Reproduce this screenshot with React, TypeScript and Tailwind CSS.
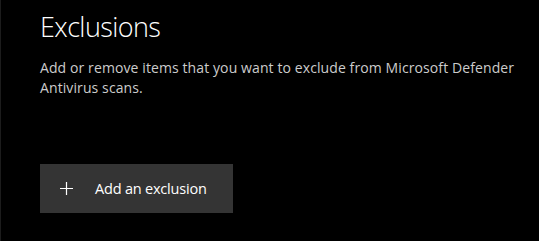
export default function App() {
  return (
    <div
      className="w-[539px] h-[241px] bg-black border-l border-[#1c1c1c] overflow-hidden"
      style={{ fontFamily: '"Open Sans", "Noto Sans", sans-serif' }}
    >
      <div className="pl-[39px] pt-[9px]">
        <h1 className="text-[27px] leading-[36px] font-light text-white tracking-[-0.6px]">Exclusions</h1>
        <p className="mt-[13px] text-[14px] leading-[20px] text-[#cccccc] w-[490px] tracking-[0.1px]">
          Add or remove items that you want to exclude from Microsoft Defender Antivirus scans.
        </p>
        <button className="mt-[66px] flex items-center h-[49px] w-[193px] bg-[#343434] text-white text-[14.5px] tracking-[-0.2px]">
          <svg width="13" height="13" viewBox="0 0 13 13" className="ml-[20px]">
            <path d="M6.5 0V13M0 6.5H13" stroke="white" strokeWidth="1.2" />
          </svg>
          <span className="ml-[22px]">Add an exclusion</span>
        </button>
      </div>
    </div>
  );
}
